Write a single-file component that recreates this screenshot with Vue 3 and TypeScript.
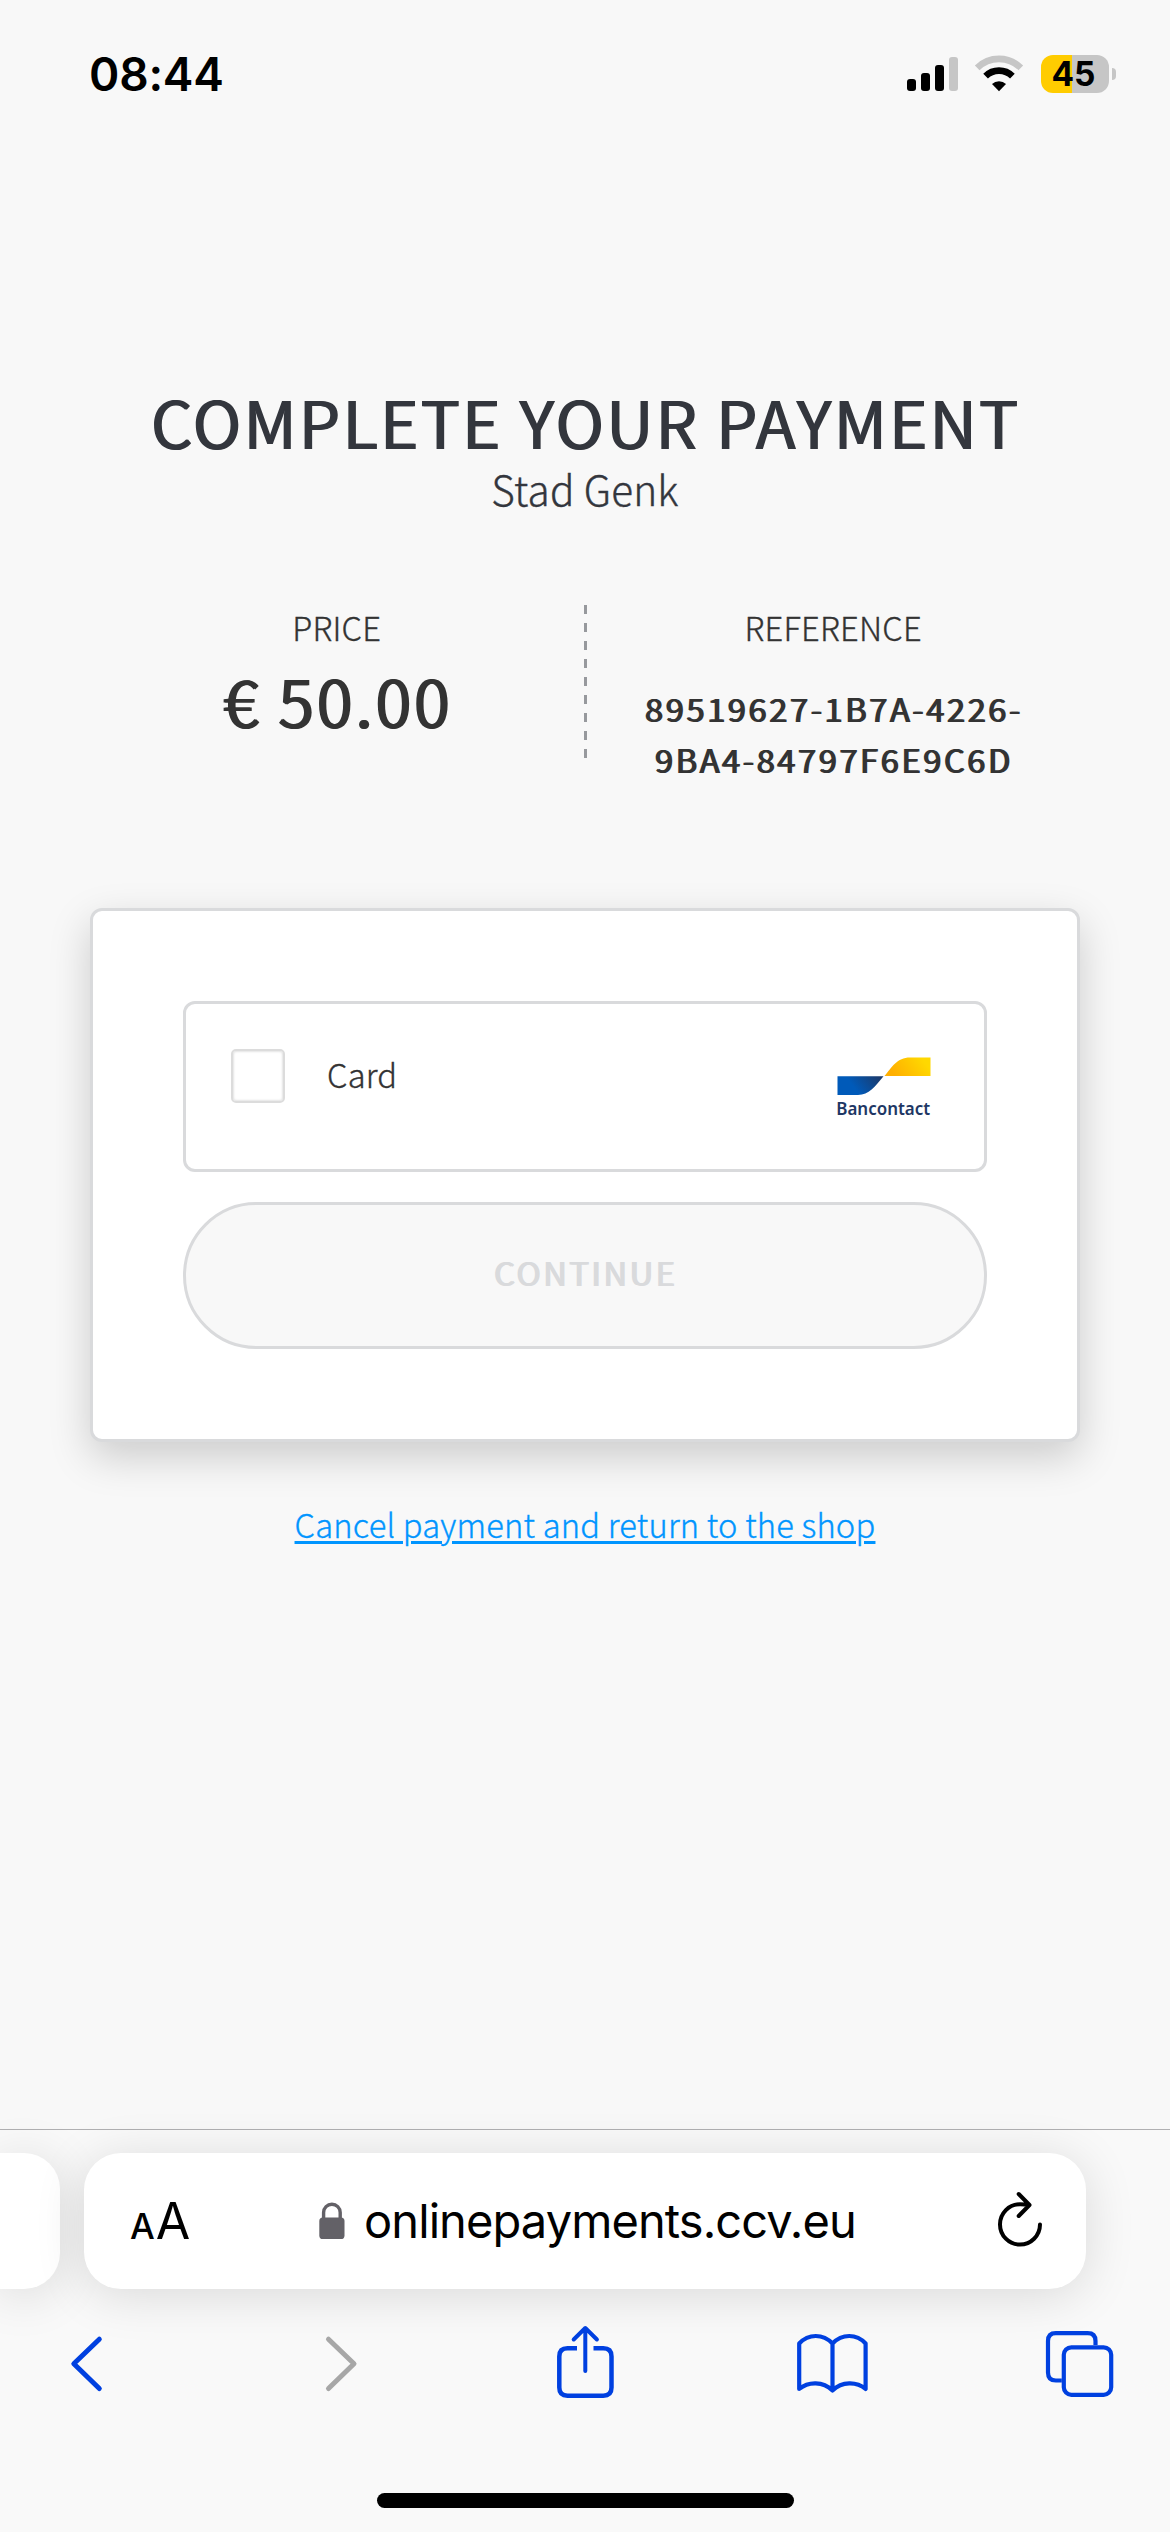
<script setup lang="ts">
interface Bar {
  height: number
  active: boolean
}

const bars: Bar[] = [
  { height: 12, active: true },
  { height: 18, active: true },
  { height: 26, active: true },
  { height: 34, active: false },
]

const payment = {
  merchant: 'Stad Genk',
  amount: '€ 50.00',
  reference: ['89519627-1B7A-4226-', '9BA4-84797F6E9C6D'],
}
</script>

<template>
  <div class="screen">
    <header class="status">
      <span class="clock">08:44</span>
      <div class="signal">
        <i
          v-for="(bar, i) in bars"
          :key="i"
          :class="['bar', { off: !bar.active }]"
          :style="{ height: bar.height + 'px' }"
        />
      </div>
      <svg class="wifi" width="50" height="38" viewBox="0 0 50 38">
        <path d="M3.2 12.8a31 31 0 0 1 43.6 0" fill="none" stroke="#c6c6c6" stroke-width="6.6" />
        <path d="M11.6 21.2a19 19 0 0 1 26.8 0" fill="none" stroke="#000" stroke-width="6.6" />
        <path d="M25 36.3l-7-7.2a10 10 0 0 1 14 0z" fill="#000" />
      </svg>
      <div class="battery"><span>45</span></div>
      <i class="nub" />
    </header>

    <main class="page">
      <h1>COMPLETE YOUR PAYMENT</h1>
      <p class="merchant">{{ payment.merchant }}</p>

      <section class="summary">
        <div class="col left">
          <span class="label price-label">PRICE</span>
          <span class="amount">{{ payment.amount }}</span>
        </div>
        <i class="divider" />
        <div class="col">
          <span class="label ref-label">REFERENCE</span>
          <span class="code"><span v-for="part in payment.reference" :key="part">{{ part }}</span></span>
        </div>
      </section>

      <section class="card">
        <label class="method">
          <i class="checkbox" />
          <span class="method-name">Card</span>
          <svg class="bancontact" width="94" height="64" viewBox="0 0 94 64">
            <defs>
              <linearGradient id="bc-blue" x1="0" x2="1" y1="0.3" y2="0">
                <stop offset="0.25" stop-color="#005ab9" />
                <stop offset="1" stop-color="#1e3764" />
              </linearGradient>
              <linearGradient id="bc-yellow" x1="0" x2="1" y1="0.6" y2="0.3">
                <stop offset="0.1" stop-color="#ffaf00" />
                <stop offset="0.9" stop-color="#ffd800" />
              </linearGradient>
            </defs>
            <path d="M.5 19.3H46.500C38 29.500 32 38 21 38H.5z" fill="url(#bc-blue)" />
            <path d="M47.500 19C55 10 60 .4 73 .4h20.500V19z" fill="url(#bc-yellow)" />
            <text x="-0.800" y="57.700" textLength="94" lengthAdjust="spacingAndGlyphs">Bancontact</text>
          </svg>
        </label>
        <button class="continue" disabled>CONTINUE</button>
      </section>

      <a class="cancel">Cancel payment and return to the shop</a>
    </main>

    <footer class="browser">
      <div class="tabs-row">
        <div class="prev-tab" />
        <div class="address">
          <span class="aa"><small>A</small>A</span>
          <svg class="lock" width="26" height="38" viewBox="0 0 26 38">
            <path d="M4.600 17V10.500a8.300 8.300 0 0 1 16.600 0V17" fill="none" stroke="#636167" stroke-width="3.400" />
            <rect x="0.300" y="15.500" width="25.200" height="21.500" rx="3.600" fill="#636167" />
          </svg>
          <span class="url">onlinepayments.ccv.eu</span>
          <svg class="reload" width="50" height="60" viewBox="995 2190 50 60">
            <path
              d="M1040 2224.500A20 20.200 0 1 1 1020 2204.200Q1025 2204.200 1029 2205M1018.700 2194l10.800 11-10.800 11"
              fill="none" stroke="#000" stroke-width="4" stroke-linecap="round" stroke-linejoin="round"
            />
          </svg>
        </div>
      </div>

      <svg class="toolbar" width="1170" height="100" viewBox="0 2310 1170 100">
        <g fill="none" stroke="#0040e0" stroke-width="4.500" stroke-linecap="round" stroke-linejoin="round">
          <path d="M99.300 2339.200L73.800 2363.700l25.500 24.800" stroke-width="5" />
          <path d="M328.500 2339.200L354 2363.700l-25.500 24.800" stroke="#a7a7a7" stroke-width="5" />
          <path
            d="M577 2348.300H567.500q-8.200 0-8.200 8.200v31q0 8.200 8.200 8.200h35.800q8.200 0 8.200-8.200v-31q0-8.200-8.200-8.200H593.500"
            stroke-linecap="butt"
          />
          <path d="M585.300 2371V2328.500M573.700 2339.500l11.600-11.500 11.600 11.500" stroke-width="4" />
          <path
            d="M832.500 2343.500C823 2333.500 808.500 2333.500 799.200 2343.500V2389C808.500 2381.300 823 2381.300 832.500 2390.500C842 2381.300 856.500 2381.300 865.600 2389V2343.500C856.500 2333.500 842 2333.500 832.500 2343.500V2390.500"
            stroke-width="4.200"
          />
          <path
            d="M1095.500 2345V2341q0-7.800-7.800-7.800h-31.900q-7.800 0-7.800 7.800v31.500q0 8 7.800 8h6"
            stroke-width="4.200" stroke-linecap="butt"
          />
          <rect x="1063.800" y="2347.300" width="47.400" height="47.500" rx="7.500" stroke-width="4.200" />
        </g>
      </svg>
      <i class="home" />
    </footer>
  </div>
</template>

<style>
body {
  margin: 0;
  background: #f8f8f8;
}
</style>

<style scoped>
* {
  box-sizing: border-box;
}
.screen {
  width: 1170px;
  height: 2532px;
  display: flex;
  flex-direction: column;
  overflow: hidden;
  background: #f8f8f8;
  color: #333;
  font-family: 'Noto Sans CJK SC', 'Noto Sans', sans-serif;
}
.status {
  height: 383px;
  padding: 44px 0 0 89px;
  display: flex;
  align-items: flex-start;
  color: #000;
  font-family: Inter, sans-serif;
}
.clock {
  width: 818px;
  font-size: 46px;
  line-height: 60px;
  font-weight: 600;
  letter-spacing: -0.2px;
}
.signal {
  width: 66px;
  height: 47px;
  display: flex;
  align-items: flex-end;
  gap: 5px;
}
.bar {
  width: 9px;
  border-radius: 3px;
  background: #000;
}
.bar.off {
  background: #c6c6c6;
}
.wifi {
  margin: 11px 17px 0 1px;
}
.battery {
  width: 68px;
  height: 38px;
  margin-top: 11px;
  padding-right: 3px;
  border-radius: 12px;
  background: linear-gradient(90deg, #ffcc00 31px, #c6c6c6 31px);
  text-align: center;
  font-size: 33.5px;
  line-height: 38px;
  font-weight: 700;
}
.nub {
  width: 4px;
  height: 12px;
  margin: 24px 0 0 3px;
  border-radius: 0 6px 6px 0;
  background: #c6c6c6;
}
.page {
  height: 1746px;
  padding: 0 90px;
  display: flex;
  flex-direction: column;
  text-align: center;
}
h1 {
  margin: 0;
  font-size: 65.5px;
  line-height: 76px;
  font-weight: 400;
  letter-spacing: 2.1px;
  color: #33363d;
  text-shadow: 1.5px 0 0 #33363d;
  white-space: nowrap;
}
.merchant {
  margin: 0;
  height: 60px;
  font-size: 40.5px;
  line-height: 60px;
  font-weight: 300;
  letter-spacing: 0.2px;
  color: #33363d;
  -webkit-text-stroke: 0.4px #33363d;
}
.summary {
  margin-top: 84px;
  height: 305px;
  display: flex;
}
.col {
  flex: 1;
  display: flex;
  flex-direction: column;
}
.label {
  font-size: 32.700px;
  line-height: 48px;
  font-weight: 300;
  letter-spacing: 0.2px;
  -webkit-text-stroke: 0.35px #333;
}
.amount {
  margin-top: 9px;
  font-size: 65.5px;
  line-height: 80px;
  font-weight: 400;
  letter-spacing: 2.1px;
  text-shadow: 1.5px 0 0 #333;
}
.divider {
  width: 3px;
  height: 153px;
  margin-top: 2px;
  background: repeating-linear-gradient(180deg, #97999d 0 9px, transparent 9px 18px);
}
.code {
  margin-top: 31px;
  display: flex;
  flex-direction: column;
  font-size: 32.700px;
  line-height: 51px;
  font-weight: 400;
  letter-spacing: 2.550px;
  text-shadow: 1.5px 0 0 #333;
}
.card {
  height: 534px;
  padding: 90px;
  border: 3px solid #d9dadc;
  border-radius: 12px;
  background: #fff;
  box-shadow: 0 15px 42px rgba(0, 0, 0, 0.18);
}
.method {
  height: 171px;
  padding: 45px 53px 0 45px;
  display: flex;
  align-items: flex-start;
  border: 3px solid #d9dadc;
  border-radius: 12px;
}
.checkbox {
  width: 54px;
  height: 54px;
  border: 2px solid #dcdcdc;
  border-radius: 5px;
  box-shadow: inset 0 0 2px 1px #e4e4e4;
}
.method-name {
  margin: 1px 0 0 42px;
  font-size: 32.700px;
  line-height: 48px;
  font-weight: 300;
  letter-spacing: 0.2px;
  -webkit-text-stroke: 0.35px #333;
}
.bancontact {
  margin: 8px 0 0 auto;
  overflow: visible;
  font-family: 'Noto Sans', sans-serif;
  font-size: 17.5px;
  font-weight: 600;
  fill: #1e3764;
}
.continue {
  display: block;
  width: 100%;
  height: 147px;
  margin-top: 30px;
  padding: 0 0 7px;
  border: 3px solid #d9dadc;
  border-radius: 74px;
  background: #f8f8f8;
  color: #d9dadc;
  font-family: inherit;
  font-size: 32.700px;
  line-height: 48px;
  font-weight: 400;
  letter-spacing: 2.5px;
  text-shadow: 1.6px 0 0 #d9dadc;
}
.cancel {
  align-self: center;
  margin-top: 58px;
  font-size: 32.700px;
  line-height: 48px;
  font-weight: 300;
  letter-spacing: 0.2px;
  color: #0095ff;
  -webkit-text-stroke: 0.35px #0095ff;
  text-decoration: underline;
  text-decoration-thickness: 3px;
  text-underline-offset: 3px;
  white-space: nowrap;
}
.browser {
  height: 403px;
  border-top: 1px solid #b0b0b2;
  background: #f9f9f9;
}
.tabs-row {
  height: 180px;
  padding-top: 23px;
  display: flex;
  gap: 24px;
}
.prev-tab,
.address {
  height: 136px;
  background: #fff;
  box-shadow: 0 6px 50px rgba(0, 0, 0, 0.13);
}
.prev-tab {
  width: 60px;
  border-radius: 0 36px 36px 0;
}
.address {
  width: 1002px;
  padding-left: 46px;
  display: flex;
  border-radius: 37px;
  color: #000;
  font-family: Inter, sans-serif;
}
.aa {
  width: 189px;
  font-size: 50px;
  line-height: 137px;
  letter-spacing: 1px;
}
.aa small {
  font-size: 35px;
  font-weight: 500;
}
.lock {
  margin: 49px 19px 0 0;
}
.url {
  width: 529px;
  font-size: 47px;
  line-height: 136px;
  letter-spacing: -0.9px;
}
.reload {
  margin: 37px 0 0 102px;
}
.toolbar {
  display: block;
}
.home {
  display: block;
  width: 417px;
  height: 15px;
  margin: 83px auto 0;
  border-radius: 8px;
  background: #000;
}
</style>
